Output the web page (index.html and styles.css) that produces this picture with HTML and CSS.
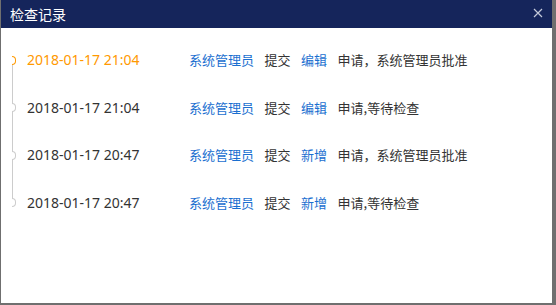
FILE: index.html
```html
<!DOCTYPE html>
<html lang="zh-CN">
<head>
    <meta charset="UTF-8">
    <meta name="viewport" content="width=device-width, initial-scale=1.0">
    <title>检查记录</title>
    <link rel="stylesheet" href="styles.css">
</head>
<body>
    <div class="dialog">
        <div class="dialog-header">
            <span class="dialog-title">检查记录</span>
            <svg class="dialog-close" width="10" height="10" viewBox="0 0 10 10">
                <path d="M1 1 L9 9 M9 1 L1 9" stroke="#c3c9da" stroke-width="1.2" fill="none"/>
            </svg>
        </div>
        <div class="dialog-body">
            <ul class="timeline">
                <li class="timeline-item current">
                    <span class="dot"></span>
                    <span class="time">2018-01-17 21:04</span>
                    <span class="user">系统管理员</span>
                    <span class="action">提交</span>
                    <span class="op">编辑</span>
                    <span class="action">申请，系统管理员批准</span>
                </li>
                <li class="timeline-item">
                    <span class="dot"></span>
                    <span class="time">2018-01-17 21:04</span>
                    <span class="user">系统管理员</span>
                    <span class="action">提交</span>
                    <span class="op">编辑</span>
                    <span class="action">申请,等待检查</span>
                </li>
                <li class="timeline-item">
                    <span class="dot"></span>
                    <span class="time">2018-01-17 20:47</span>
                    <span class="user">系统管理员</span>
                    <span class="action">提交</span>
                    <span class="op">新增</span>
                    <span class="action">申请，系统管理员批准</span>
                </li>
                <li class="timeline-item">
                    <span class="dot"></span>
                    <span class="time">2018-01-17 20:47</span>
                    <span class="user">系统管理员</span>
                    <span class="action">提交</span>
                    <span class="op">新增</span>
                    <span class="action">申请,等待检查</span>
                </li>
            </ul>
        </div>
    </div>
</body>
</html>
```

FILE: styles.css
```css
html, body {
    margin: 0;
    padding: 0;
}
body {
    font-family: "Noto Sans CJK SC", "Noto Sans", sans-serif;
    font-size: 13px;
    color: #333;
    background: #fff;
}
.dialog {
    width: 551px;
    height: 303px;
    border-left: 1px solid #6f6f6f;
    border-right: 4px solid #6f6f6f;
    border-bottom: 2px solid #6f6f6f;
    display: flex;
    flex-direction: column;
    background: #fff;
}
.dialog-header {
    height: 28px;
    background: #15255b;
    color: #fff;
    display: flex;
    align-items: center;
    justify-content: space-between;
    padding: 0 9px 0 9px;
}
.dialog-title {
    font-size: 14px;
}
.dialog-close {
    display: block;
    margin-top: -2px;
}
.dialog-body {
    flex: 1;
    padding-top: 8px;
}
.timeline {
    list-style: none;
    margin: 0;
    padding: 0;
}
.timeline-item {
    position: relative;
    height: 47.5px;
    display: flex;
    align-items: center;
    padding-left: 26px;
}
.timeline-item::before {
    content: "";
    position: absolute;
    left: 11px;
    top: 50%;
    height: 100%;
    border-left: 1px solid #ccc;
}
.timeline-item:last-child::before {
    display: none;
}
.dot {
    position: absolute;
    left: 11px;
    top: 50%;
    margin-top: -4px;
    width: 3px;
    height: 7px;
    border: 1px solid #ccc;
    border-left: none;
    border-radius: 0 5px 5px 0;
    background: #fff;
    z-index: 1;
}
.current .dot {
    border-color: #f90;
}
.time {
    width: 162px;
    font-family: "Noto Sans", sans-serif;
    font-size: 14px;
}
.current .time {
    color: #f90;
}
.user, .action, .op {
    margin-right: 10.5px;
}
.user, .op {
    color: #1a6fd0;
}
```
